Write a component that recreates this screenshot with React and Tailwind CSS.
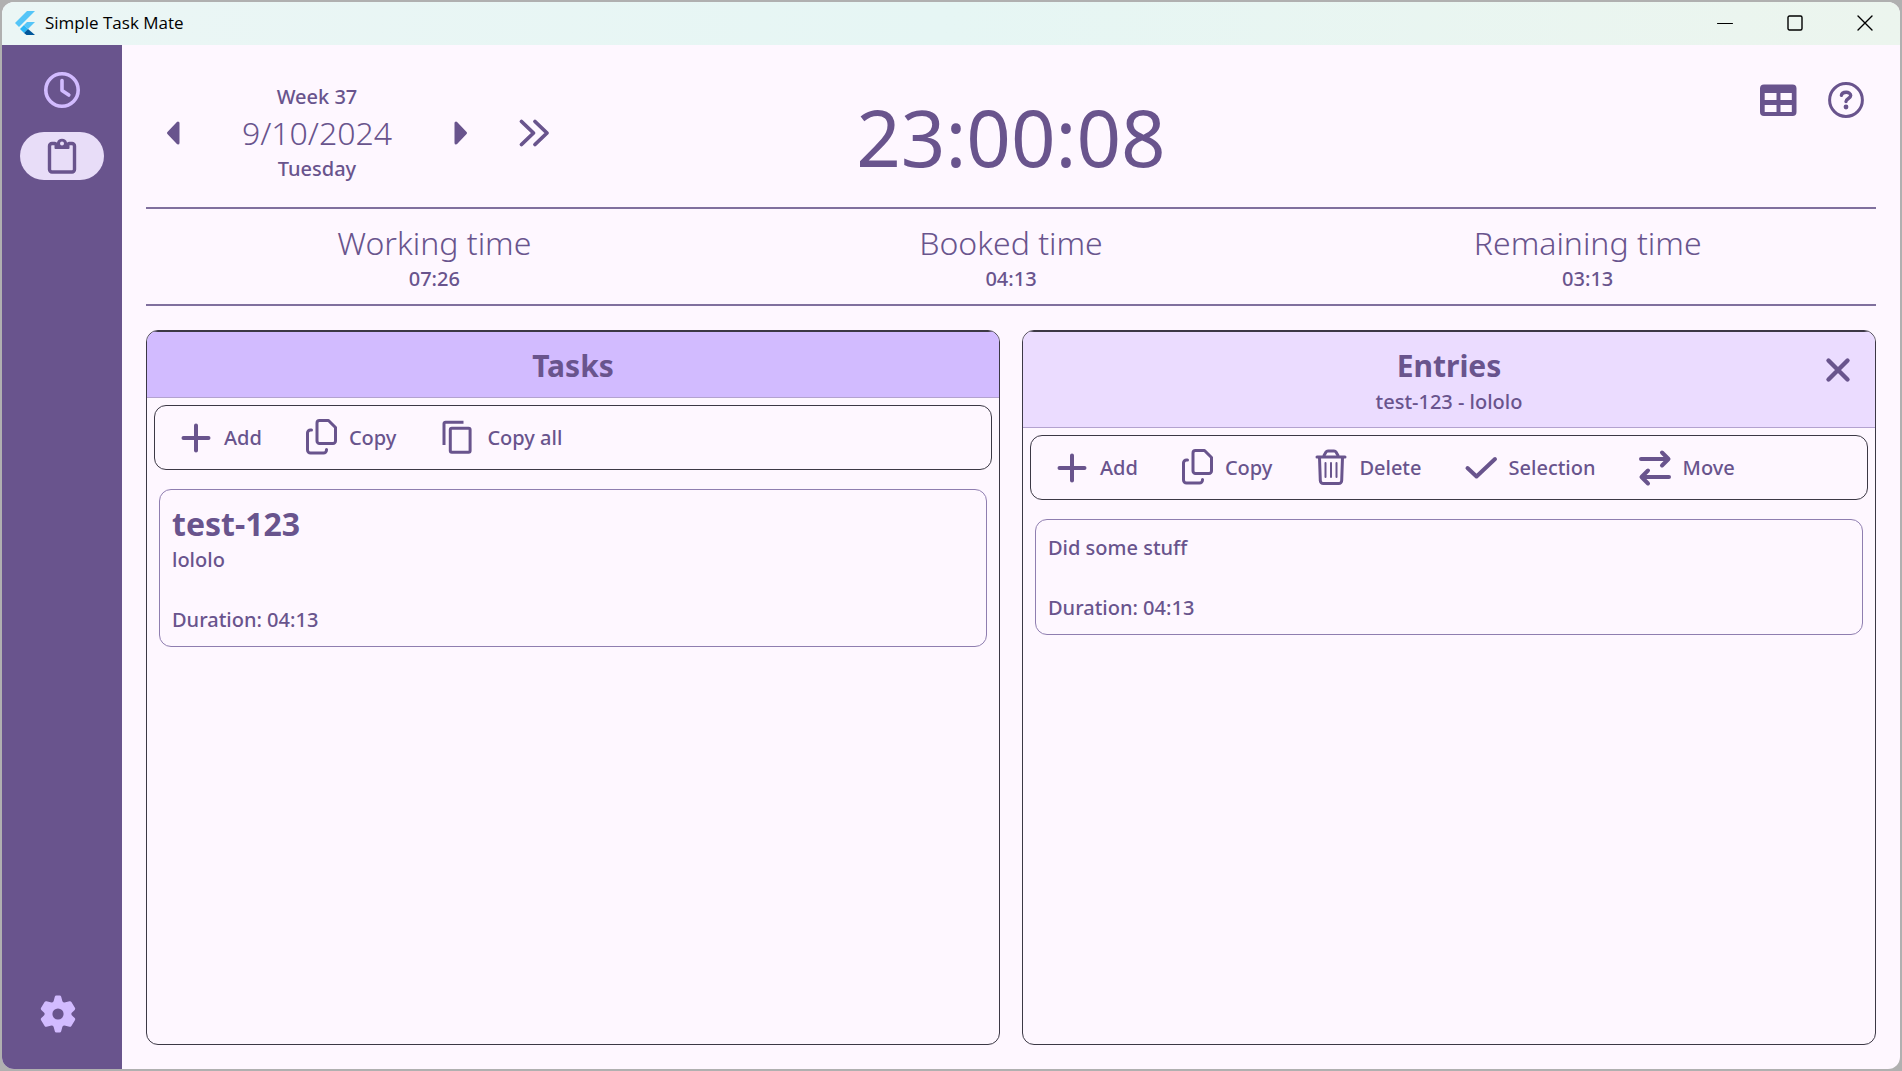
import React from "react";

const Svg = ({ children, className = "size-9", box = 36, width = 3 }) => (
  <svg
    viewBox={`0 0 ${box} ${box}`}
    className={`${className} shrink-0 overflow-visible`}
    fill="none"
    stroke="currentColor"
    strokeWidth={width}
    strokeLinecap="round"
    strokeLinejoin="round"
    aria-hidden="true"
  >
    {children}
  </svg>
);

const FlutterLogo = () => (
  <svg viewBox="0 0 20 24" className="h-6 w-5 shrink-0" aria-hidden="true">
    <path d="M12 0h8L4 16l-4-4z" fill="#54c5f8" />
    <path d="M12 11h8l-7 7-4-4z" fill="#54c5f8" />
    <path d="M9 14l4 4-4 4-4-4z" fill="#29b6f6" />
    <path d="M9 22l4-4 7 6h-8.500z" fill="#01579b" />
  </svg>
);

const ClockIcon = () => (
  <Svg width={3.6}>
    <circle cx="18" cy="18" r="16.2" />
    <path d="M18 8.500V18.500L24.800 23" />
  </Svg>
);

const ClipboardIcon = () => (
  <Svg width={3.4}>
    <path d="M11 5.500H8a2.500 2.500 0 0 0-2.500 2.500V31.500a2.500 2.500 0 0 0 2.500 2.500h20a2.500 2.500 0 0 0 2.500-2.500V8A2.500 2.500 0 0 0 28 5.500H25" />
    <path
      d="M10.500 10V4.500H13a5.200 5.200 0 0 1 10 0h2.500V10a1 1 0 0 1-1 1h-13a1 1 0 0 1-1-1zM18 3.500a2 2 0 1 0 0 4a2 2 0 1 0 0-4z"
      fill="currentColor"
      fillRule="evenodd"
      stroke="none"
    />
  </Svg>
);

const GearIcon = () => (
  <Svg>
    <path
      d="M14.800 0.800Q15.100-.5 16.400-.5H19.600Q20.900-.5 21.200.8L22.400 5.200Q23 6.600 24.500 6.600L29.500 5.300Q30.700 5 31.400 6.100L34.900 11.800Q35.600 13 34.700 13.900L31.800 16.800Q30.900 18 31.800 19.200L34.700 22.100Q35.600 23 34.900 24.200L31.400 29.900Q30.700 31 29.500 30.700L24.500 29.400Q23 29.400 22.400 30.800L21.200 35.200Q20.900 36.500 19.600 36.500H16.400Q15.100 36.500 14.800 35.200L13.600 30.800Q13 29.400 11.500 29.400L6.500 30.700Q5.300 31 4.600 29.900L1.100 24.200Q.4 23 1.300 22.100L4.200 19.200Q5.100 18 4.200 16.800L1.300 13.900Q.4 13 1.100 11.800L4.600 6.100Q5.300 5 6.500 5.300L11.500 6.600Q13 6.600 13.600 5.200ZM18 12.400a5.600 5.600 0 1 0 0 11.200a5.600 5.600 0 1 0 0-11.200Z"
      fill="currentColor"
      fillRule="evenodd"
      stroke="none"
    />
  </Svg>
);

const TableIcon = () => (
  <Svg>
    <path
      d="M4 2.500H32.500a4 4 0 0 1 4 4V30a4 4 0 0 1-4 4H4a4 4 0 0 1-4-4V6.500a4 4 0 0 1 4-4ZM4.700 11V18H16.500V11ZM20.500 11V18H31.800V11ZM4.700 23V30H16.500V23ZM20.500 23V30H31.800V23Z"
      fill="currentColor"
      fillRule="evenodd"
      stroke="none"
    />
  </Svg>
);

const HelpIcon = () => (
  <Svg width={3}>
    <circle cx="18" cy="18" r="16.400" />
    <path d="M13.400 13.400C13.800 9.300 22.700 9 22.700 13.600C22.700 16.600 18 16.400 18 19.600" strokeWidth="3.400" />
    <circle cx="18" cy="25" r="2.400" fill="currentColor" stroke="none" />
  </Svg>
);

const PrevIcon = () => (
  <Svg>
    <path d="M12.500 18L22 8V28Z" fill="currentColor" />
  </Svg>
);

const NextIcon = () => (
  <Svg>
    <path d="M23.500 18L14 8V28Z" fill="currentColor" />
  </Svg>
);

const ForwardIcon = () => (
  <Svg width={3.8}>
    <path d="M5.500 6.500L17.500 18L5.500 29.500M19 6.500L31 18L19 29.500" />
  </Svg>
);

const PlusIcon = () => (
  <Svg width={4}>
    <path d="M18 5.500V30.500M5.500 18H30.500" />
  </Svg>
);

const CopyIcon = () => (
  <Svg width={3}>
    <path d="M16.500 .5H25.500L32.500 7.500V21a2.500 2.500 0 0 1-2.500 2.500H16.500a2.500 2.500 0 0 1-2.500-2.500V3a2.500 2.500 0 0 1 2.500-2.500Z" />
    <path d="M8.500 10H7.500a3 3 0 0 0-3 3V30a3 3 0 0 0 3 3H20.500a3 3 0 0 0 3-3V29.500" />
  </Svg>
);

const CopyAllIcon = () => (
  <Svg width={3} className="mx-[2px] size-9">
    <path d="M24.500 2.200H6.500a1.500 1.500 0 0 0-1.500 1.500V25" strokeLinecap="butt" />
    <rect x="11.300" y="8.300" width="19.800" height="24" rx="1.500" />
  </Svg>
);

const TrashIcon = () => (
  <Svg width={3}>
    <path d="M4 7H32M6.500 7.500L7.300 30.500a3 3 0 0 0 3 3H25.700a3 3 0 0 0 3-3L29.500 7.500" />
    <path d="M11 5.500L13 2Q13.600 1 15 1H21Q22.400 1 23 2L25 5.500" />
    <path d="M12.500 13V27M18 13V27M23.500 13V27" strokeWidth="2" />
  </Svg>
);

const CheckIcon = () => (
  <Svg width={4}>
    <path d="M4.500 18L13.500 26.500L32 9" />
  </Svg>
);

const MoveIcon = () => (
  <Svg width={4}>
    <path d="M4 9H31M25 2.500L31.500 9L25 15.500M32 27H5M11 20.500L4.500 27L11 33.500" />
  </Svg>
);

const CloseIcon = () => (
  <Svg width={4.4}>
    <path d="M8.500 8.500L27.500 27.500M27.500 8.500L8.500 27.500" />
  </Svg>
);

const TitleBar = () => (
  <header className="flex h-[43px] shrink-0 items-center bg-linear-to-r from-[#ebf6f5] via-[#e6f6f4] to-[#ecf5ee] pl-[13px] pb-[2px] text-black">
    <FlutterLogo />
    <h1 className="ml-[10px] grow font-['Open_Sans',sans-serif] text-[17px] leading-6">Simple Task Mate</h1>
    <button type="button" aria-label="Minimize" className="flex h-full w-[70px] items-center justify-center">
      <Svg className="size-4" box={16} width={1}>
        <path d="M.5 8.500H15.500" />
      </Svg>
    </button>
    <button type="button" aria-label="Maximize" className="flex h-full w-[70px] items-center justify-center">
      <Svg className="size-4" box={16} width={1.4}>
        <rect x="1" y="1" width="14" height="14" rx="1.500" />
      </Svg>
    </button>
    <button type="button" aria-label="Close" className="flex h-full w-[70px] items-center justify-center">
      <Svg className="size-4" box={16} width={1.4}>
        <path d="M1 1L15 15M15 1L1 15" />
      </Svg>
    </button>
  </header>
);

const Sidebar = () => (
  <nav aria-label="Views" className="flex w-[120px] shrink-0 flex-col items-center bg-[#69548d] pt-[21px] pb-[37px] text-[#d2bbff]">
    <button type="button" aria-label="Clock" className="flex h-12 w-[84px] items-center justify-center rounded-full">
      <ClockIcon />
    </button>
    <button
      type="button"
      aria-label="Tasks"
      aria-current="page"
      className="mt-[18px] flex h-12 w-[84px] items-center justify-center rounded-full bg-[#e8ddf8] text-[#69548d]"
    >
      <ClipboardIcon />
    </button>
    <button type="button" aria-label="Settings" className="mt-auto mr-[9px]">
      <GearIcon />
    </button>
  </nav>
);

const DateNav = () => (
  <div className="flex items-center gap-9 pl-[10px]">
    <button type="button" aria-label="Previous day">
      <PrevIcon />
    </button>
    <div className="w-[178px] text-center">
      <p className="text-[20px] leading-[26px] font-medium">Week 37</p>
      <p className="text-[32px] leading-[46px] font-light">9/10/2024</p>
      <p className="text-[20px] leading-[26px] font-medium">Tuesday</p>
    </div>
    <div className="flex gap-[38px]">
      <button type="button" aria-label="Next day">
        <NextIcon />
      </button>
      <button type="button" aria-label="Go to today">
        <ForwardIcon />
      </button>
    </div>
  </div>
);

const Stat = ({ label, value }) => (
  <div className="text-center">
    <dt className="text-[32px] leading-[44px] font-light">{label}</dt>
    <dd className="text-[20px] leading-[28px] font-medium">{value}</dd>
  </div>
);

const Tool = ({ icon, label }) => (
  <button type="button" className="flex items-center gap-[10px] text-[20px] leading-7 font-medium whitespace-nowrap">
    {icon}
    {label}
  </button>
);

const Toolbar = ({ label, children }) => (
  <div
    role="toolbar"
    aria-label={label}
    className="mx-[7px] mt-[7px] flex h-[65px] shrink-0 items-center gap-[41px] rounded-xl border border-[#3c3845] pt-px pl-[23px]"
  >
    {children}
  </div>
);

const Panel = ({ children }) => (
  <section className="flex flex-col overflow-hidden rounded-xl border border-[#3c3845]">{children}</section>
);

export default function App() {
  return (
    <div className="h-screen bg-[#b0b0b0] p-[2px] font-['Noto_Sans',sans-serif] text-[#69548d]">
      <div className="flex h-full flex-col overflow-hidden rounded-xl bg-[#fef7ff]">
        <TitleBar />
        <div className="flex min-h-0 grow">
          <Sidebar />
          <main className="flex min-w-0 grow flex-col px-6 pb-6">
            <div className="grid h-[162px] shrink-0 grid-cols-[1fr_auto_1fr]">
              <div className="flex items-center pt-[14px]">
                <DateNav />
              </div>
              <time className="pt-8 text-[78px] leading-[120px]">23:00:08</time>
              <div className="flex justify-end gap-8 pt-[37px] pr-3">
                <button type="button" aria-label="Table view" className="size-9">
                  <TableIcon />
                </button>
                <button type="button" aria-label="Help" className="size-9">
                  <HelpIcon />
                </button>
              </div>
            </div>
            <dl className="grid h-[99px] shrink-0 grid-cols-3 items-center border-y-2 border-[#80709e]">
              <Stat label="Working time" value="07:26" />
              <Stat label="Booked time" value="04:13" />
              <Stat label="Remaining time" value="03:13" />
            </dl>
            <div className="mt-6 grid min-h-0 grow grid-cols-2 gap-[22px]">
              <Panel>
                <header className="border-t border-b border-t-[#3c3845] border-b-[#b3a2cf] bg-[#d2bbff] pt-[13px] pb-[10px] text-center">
                  <h2 className="text-[30px] leading-[42px] font-bold">Tasks</h2>
                </header>
                <Toolbar label="Task actions">
                  <Tool icon={<PlusIcon />} label="Add" />
                  <Tool icon={<CopyIcon />} label="Copy" />
                  <Tool icon={<CopyAllIcon />} label="Copy all" />
                </Toolbar>
                <article className="mx-3 mt-[19px] rounded-xl border border-[#8f7eb0] px-3 pt-[13px] pb-[11px] text-[20px] leading-[30px] font-medium">
                  <h3 className="text-[32px] leading-[42px] font-bold">test-123</h3>
                  <p>lololo</p>
                  <p className="mt-[30px]">Duration: 04:13</p>
                </article>
              </Panel>
              <Panel>
                <header className="relative border-t border-b border-t-[#3c3845] border-b-[#b3a2cf] bg-[#ebdcff] pt-[13px] pb-[10px] text-center">
                  <h2 className="text-[30px] leading-[42px] font-bold">Entries</h2>
                  <p className="text-[20px] leading-[30px] font-medium">test-123 - lololo</p>
                  <button type="button" aria-label="Close entries" className="absolute top-5 right-[19px]">
                    <CloseIcon />
                  </button>
                </header>
                <Toolbar label="Entry actions">
                  <Tool icon={<PlusIcon />} label="Add" />
                  <Tool icon={<CopyIcon />} label="Copy" />
                  <Tool icon={<TrashIcon />} label="Delete" />
                  <Tool icon={<CheckIcon />} label="Selection" />
                  <Tool icon={<MoveIcon />} label="Move" />
                </Toolbar>
                <article className="mx-3 mt-[19px] rounded-xl border border-[#8f7eb0] px-3 pt-[13px] pb-[11px] text-[20px] leading-[30px] font-medium">
                  <p>Did some stuff</p>
                  <p className="mt-[30px]">Duration: 04:13</p>
                </article>
              </Panel>
            </div>
          </main>
        </div>
      </div>
    </div>
  );
}
